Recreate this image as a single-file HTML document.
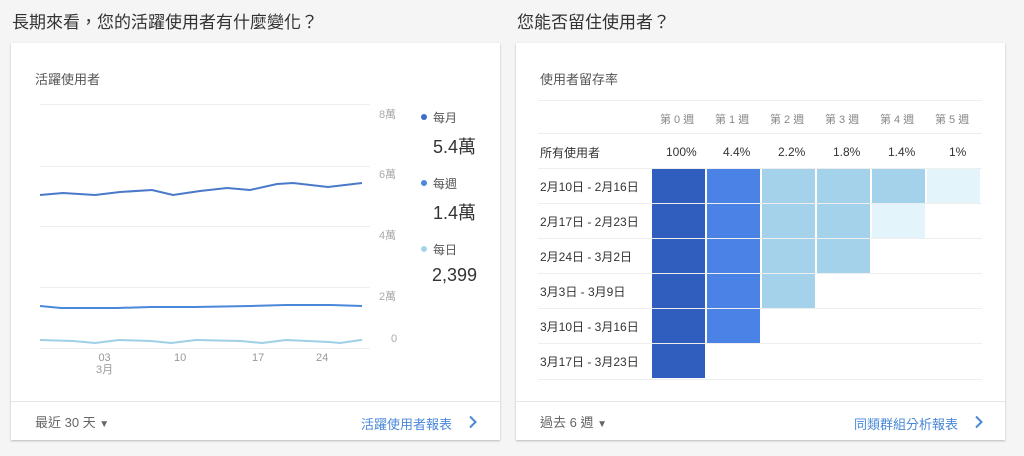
<!DOCTYPE html><html><head><meta charset="utf-8"><style>
body{margin:0;width:1024px;height:456px;background:#f5f5f5;font-family:"Liberation Sans","Noto Sans CJK TC",sans-serif;position:relative;overflow:hidden}
.a{position:absolute;white-space:nowrap}
.card{position:absolute;background:#fff;box-shadow:0 1px 2px rgba(0,0,0,.25);top:43px;height:397px}
.h{font-size:17px;color:#333;top:8px}
.sep{position:absolute;left:0;right:0;top:358px;border-top:1px solid #e6e6e6}
.gl{position:absolute;height:1px;background:#eee}
.c{position:absolute;width:53px;height:34px}
.yl{position:absolute;font-size:11px;color:#aaa}
</style></head><body>
<div class="a h" style="left:12px">長期來看，您的活躍使用者有什麼變化？</div>
<div class="a h" style="left:517px">您能否留住使用者？</div>

<div class="card" style="left:11px;width:489px">
<div class="a" style="left:24px;top:26px;font-size:13px;color:#555">活躍使用者</div>
<div class="gl" style="left:29px;width:330px;top:61px"></div>
<div class="gl" style="left:29px;width:330px;top:123px"></div>
<div class="gl" style="left:29px;width:330px;top:183px"></div>
<div class="gl" style="left:29px;width:330px;top:244px"></div>
<div class="gl" style="left:29px;width:330px;top:305px"></div>
<div class="yl" style="left:368px;top:63px">8萬</div>
<div class="yl" style="left:368px;top:123px">6萬</div>
<div class="yl" style="left:368px;top:184px">4萬</div>
<div class="yl" style="left:368px;top:245px">2萬</div>
<div class="yl" style="left:380px;top:290px">0</div>
<svg class="a" style="left:0;top:0" width="489" height="330">
<polyline fill="none" stroke="#4a79c9" stroke-width="2" points="29,152 52,150 84,152 109,149 141,147 162,152 189,148 216,145 239,147 266,141 282,140 317,144 351,140"/>
<polyline fill="none" stroke="#4a88d8" stroke-width="2" points="29,263 50,265 106,265 140,264 184,264 240,263 275,262 320,262 351,263"/>
<polyline fill="none" stroke="#9fcfe6" stroke-width="2" points="29,297 62,298 84,300 108,297 140,298 160,300 185,297 230,298 251,300 275,297 318,299 329,300 350,297 351,297"/>
</svg>
<div class="a" style="left:85px;top:309px;font-size:11px;color:#999;line-height:12px;text-align:center">03<br>3月</div>
<div class="a" style="left:163px;top:309px;font-size:11px;color:#999">10</div>
<div class="a" style="left:241px;top:309px;font-size:11px;color:#999">17</div>
<div class="a" style="left:305px;top:309px;font-size:11px;color:#999">24</div>
<div class="a" style="left:410px;top:71px;width:6px;height:6px;border-radius:3px;background:#3b6fc9"></div>
<div class="a" style="left:422px;top:66px;font-size:12px;color:#555">每月</div>
<div class="a" style="left:422px;top:90px;font-size:18px;color:#333">5.4萬</div>
<div class="a" style="left:410px;top:137px;width:6px;height:6px;border-radius:3px;background:#4a8ad8"></div>
<div class="a" style="left:422px;top:132px;font-size:12px;color:#555">每週</div>
<div class="a" style="left:422px;top:156px;font-size:18px;color:#333">1.4萬</div>
<div class="a" style="left:410px;top:203px;width:6px;height:6px;border-radius:3px;background:#a6d4ea"></div>
<div class="a" style="left:422px;top:198px;font-size:12px;color:#555">每日</div>
<div class="a" style="left:421px;top:222px;font-size:18px;color:#333">2,399</div>
<div class="sep"></div>
<div class="a" style="left:24px;top:369px;font-size:13px;color:#666">最近 30 天 <span style="font-size:10px">▼</span></div>
<div class="a" style="left:350px;top:371px;font-size:13px;color:#4a88d8">活躍使用者報表</div>
<svg class="a" style="left:457px;top:372px" width="10" height="14"><path d="M2 1.5 L7.5 7 L2 12.5" fill="none" stroke="#4a88d8" stroke-width="2"/></svg>
</div>

<div class="card" style="left:516px;width:489px">
<div class="a" style="left:24px;top:26px;font-size:13px;color:#555">使用者留存率</div>
<div class="gl" style="left:22px;width:444px;top:57px"></div>
<div class="gl" style="left:22px;width:444px;top:90px"></div>
<div class="gl" style="left:22px;width:444px;top:125px"></div>
<div class="gl" style="left:22px;width:444px;top:160px"></div>
<div class="gl" style="left:22px;width:444px;top:195px"></div>
<div class="gl" style="left:22px;width:444px;top:230px"></div>
<div class="gl" style="left:22px;width:444px;top:265px"></div>
<div class="gl" style="left:22px;width:444px;top:300px"></div>
<div class="gl" style="left:22px;width:444px;top:336px"></div>
<div class="a" style="left:144px;top:68px;font-size:11px;color:#888">第 0 週</div>
<div class="a" style="left:199px;top:68px;font-size:11px;color:#888">第 1 週</div>
<div class="a" style="left:254px;top:68px;font-size:11px;color:#888">第 2 週</div>
<div class="a" style="left:309px;top:68px;font-size:11px;color:#888">第 3 週</div>
<div class="a" style="left:364px;top:68px;font-size:11px;color:#888">第 4 週</div>
<div class="a" style="left:419px;top:68px;font-size:11px;color:#888">第 5 週</div>
<div class="a" style="left:24px;top:101px;font-size:12px;color:#333">所有使用者</div>
<div class="a" style="left:150px;top:102px;font-size:12px;color:#333">100%</div>
<div class="a" style="left:207px;top:102px;font-size:12px;color:#333">4.4%</div>
<div class="a" style="left:262px;top:102px;font-size:12px;color:#333">2.2%</div>
<div class="a" style="left:317px;top:102px;font-size:12px;color:#333">1.8%</div>
<div class="a" style="left:372px;top:102px;font-size:12px;color:#333">1.4%</div>
<div class="a" style="left:433px;top:102px;font-size:12px;color:#333">1%</div>
<div class="a" style="left:24px;top:135px;font-size:12px;color:#333">2月10日 - 2月16日</div>
<div class="a" style="left:24px;top:170px;font-size:12px;color:#333">2月17日 - 2月23日</div>
<div class="a" style="left:24px;top:205px;font-size:12px;color:#333">2月24日 - 3月2日</div>
<div class="a" style="left:24px;top:240px;font-size:12px;color:#333">3月3日 - 3月9日</div>
<div class="a" style="left:24px;top:275px;font-size:12px;color:#333">3月10日 - 3月16日</div>
<div class="a" style="left:24px;top:310px;font-size:12px;color:#333">3月17日 - 3月23日</div>
<div class="c" style="left:136px;top:126px;background:#2f5ebf"></div>
<div class="c" style="left:191px;top:126px;background:#4a82e6"></div>
<div class="c" style="left:246px;top:126px;background:#a4d2ea"></div>
<div class="c" style="left:301px;top:126px;background:#a4d2ea"></div>
<div class="c" style="left:356px;top:126px;background:#a4d2ea"></div>
<div class="c" style="left:411px;top:126px;background:#e3f4fa"></div>
<div class="c" style="left:136px;top:161px;background:#2f5ebf"></div>
<div class="c" style="left:191px;top:161px;background:#4a82e6"></div>
<div class="c" style="left:246px;top:161px;background:#a4d2ea"></div>
<div class="c" style="left:301px;top:161px;background:#a4d2ea"></div>
<div class="c" style="left:356px;top:161px;background:#e3f4fa"></div>
<div class="c" style="left:136px;top:196px;background:#2f5ebf"></div>
<div class="c" style="left:191px;top:196px;background:#4a82e6"></div>
<div class="c" style="left:246px;top:196px;background:#a4d2ea"></div>
<div class="c" style="left:301px;top:196px;background:#a4d2ea"></div>
<div class="c" style="left:136px;top:231px;background:#2f5ebf"></div>
<div class="c" style="left:191px;top:231px;background:#4a82e6"></div>
<div class="c" style="left:246px;top:231px;background:#a4d2ea"></div>
<div class="c" style="left:136px;top:266px;background:#2f5ebf"></div>
<div class="c" style="left:191px;top:266px;background:#4a82e6"></div>
<div class="c" style="left:136px;top:301px;background:#2f5ebf"></div>
<div class="sep"></div>
<div class="a" style="left:24px;top:369px;font-size:13px;color:#666">過去 6 週 <span style="font-size:10px">▼</span></div>
<div class="a" style="left:338px;top:371px;font-size:13px;color:#4a88d8">同類群組分析報表</div>
<svg class="a" style="left:458px;top:372px" width="10" height="14"><path d="M2 1.5 L7.5 7 L2 12.5" fill="none" stroke="#4a88d8" stroke-width="2"/></svg>
</div>
</body></html>
